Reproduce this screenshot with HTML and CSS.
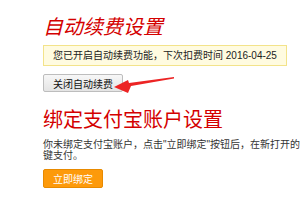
FILE: index.html
```html
<!DOCTYPE html>
<html lang="zh-CN">
<head>
    <meta charset="UTF-8">
    <title>自动续费设置</title>
    <link rel="stylesheet" href="styles.css">
</head>
<body>

<div class="setting-page">
    <h2 class="sec-title sec-title-italic">自动续费设置</h2>
    <div class="notice-box">您已开启自动续费功能，下次扣费时间 2016-04-25</div>
    <div class="btn-row">
        <button class="gray-btn">关闭自动续费</button>
    </div>

    <h2 class="sec-title">绑定支付宝账户设置</h2>
    <p class="bind-tip">你未绑定支付宝账户，点击"立即绑定"按钮后，在新打开的页面中完成绑定，即可使用支付宝一键支付。</p>
    <button class="orange-btn">立即绑定</button>

    <!-- 标注箭头 -->
    <svg class="mark-arrow" width="70" height="20" viewBox="0 0 70 20">
        <polygon points="0,10 14,3 15,6 60,0 60,1.5 17,9 14,16" fill="#ec2424"/>
    </svg>
</div>

</body>
</html>
```

FILE: styles.css
```css
html, body {
    margin: 0;
    padding: 0;
    background: #fff;
    overflow: hidden;
}
.setting-page {
    position: relative;
    padding: 15px 0 0 43px;
    font-family: 'Liberation Sans', 'Noto Sans CJK SC', sans-serif;
    font-size: 10px;
    line-height: 12px;
    color: #222;
}
.sec-title {
    margin: 0;
    font-size: 20px;
    line-height: 24px;
    font-weight: normal;
    color: #d40000;
    white-space: nowrap;
}
.sec-title-italic {
    font-style: italic;
}
.notice-box {
    display: inline-block;
    vertical-align: top;
    margin-top: 6px;
    padding: 0 9px;
    height: 19px;
    line-height: 19px;
    background: #fffbe0;
    border: 1px solid #f3e38a;
    white-space: nowrap;
}
.btn-row {
    margin: 8px 0 16px;
}
.gray-btn {
    display: block;
    width: 80px;
    height: 18px;
    padding: 0;
    font-family: inherit;
    font-size: 10px;
    color: #111;
    background: linear-gradient(#f7f7f7, #e4e4e4);
    border: 1px solid #bdbdbd;
    border-radius: 2px;
}
.bind-tip {
    width: 420px;
    margin: 7px 0 8px;
    line-height: 11px;
    color: #333;
}
.orange-btn {
    display: block;
    width: 60px;
    height: 19px;
    padding: 0;
    font-family: inherit;
    font-size: 10px;
    color: #fff;
    background: #fd9a0b;
    border: 1px solid #e88a00;
    border-radius: 2px;
}
.mark-arrow {
    position: absolute;
    left: 114px;
    top: 77px;
}
```
